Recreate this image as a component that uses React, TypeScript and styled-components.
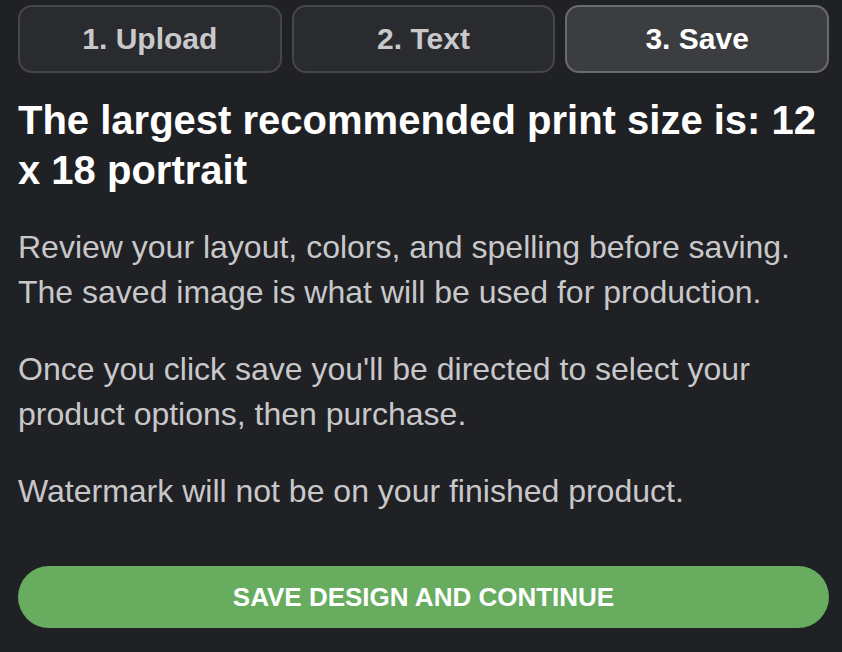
import styled, { createGlobalStyle } from 'styled-components';

const steps = ['1. Upload', '2. Text', '3. Save'];

const GlobalStyle = createGlobalStyle`
  html, body {
    margin: 0;
    background: #202124;
  }
  body {
    font-family: "Liberation Sans", Arial, sans-serif;
  }
`;

function App() {
  const active = 2;
  return (
    <Page>
      <GlobalStyle />
      <Tabs>
        {steps.map((label, i) => (
          <Tab key={label} $active={i === active}>
            {label}
          </Tab>
        ))}
      </Tabs>
      <Heading>The largest recommended print size is: 12 x 18 portrait</Heading>
      <Copy>
        Review your layout, colors, and spelling before saving. The saved image is what will be
        used for production.
      </Copy>
      <Copy>Once you click save you'll be directed to select your product options, then purchase.</Copy>
      <Copy>Watermark will not be on your finished product.</Copy>
      <SaveButton>Save design and continue</SaveButton>
    </Page>
  );
}

const Page = styled.div`
  padding: 5px 13px 24px 18px;
  color: #fff;
`;

const Tabs = styled.div`
  display: grid;
  grid-template-columns: repeat(3, 1fr);
  gap: 10px;
`;

const Tab = styled.button<{ $active: boolean }>`
  height: 68px;
  border-radius: 14px;
  border: 2px solid ${(p) => (p.$active ? '#6a6b6f' : '#45464a')};
  background: ${(p) => (p.$active ? '#3c3d40' : '#2a2b2f')};
  color: ${(p) => (p.$active ? '#ffffff' : '#c9c9cb')};
  font-family: inherit;
  font-size: 30px;
  font-weight: 700;
  cursor: pointer;
`;

const Heading = styled.h2`
  margin: 22px 0 0;
  font-size: 40px;
  line-height: 50px;
  font-weight: 700;
  color: #fff;
`;

const Copy = styled.p`
  margin: 30px 0 0;
  font-size: 32px;
  line-height: 45px;
  color: #c8c8ca;

  & + & {
    margin-top: 32px;
  }
`;

const SaveButton = styled.button`
  display: block;
  width: 100%;
  height: 62px;
  margin-top: 52px;
  border: none;
  border-radius: 31px;
  background: #67ac5f;
  color: #fff;
  font-family: inherit;
  font-size: 26px;
  font-weight: 700;
  text-transform: uppercase;
  cursor: pointer;
`;

export default App;
